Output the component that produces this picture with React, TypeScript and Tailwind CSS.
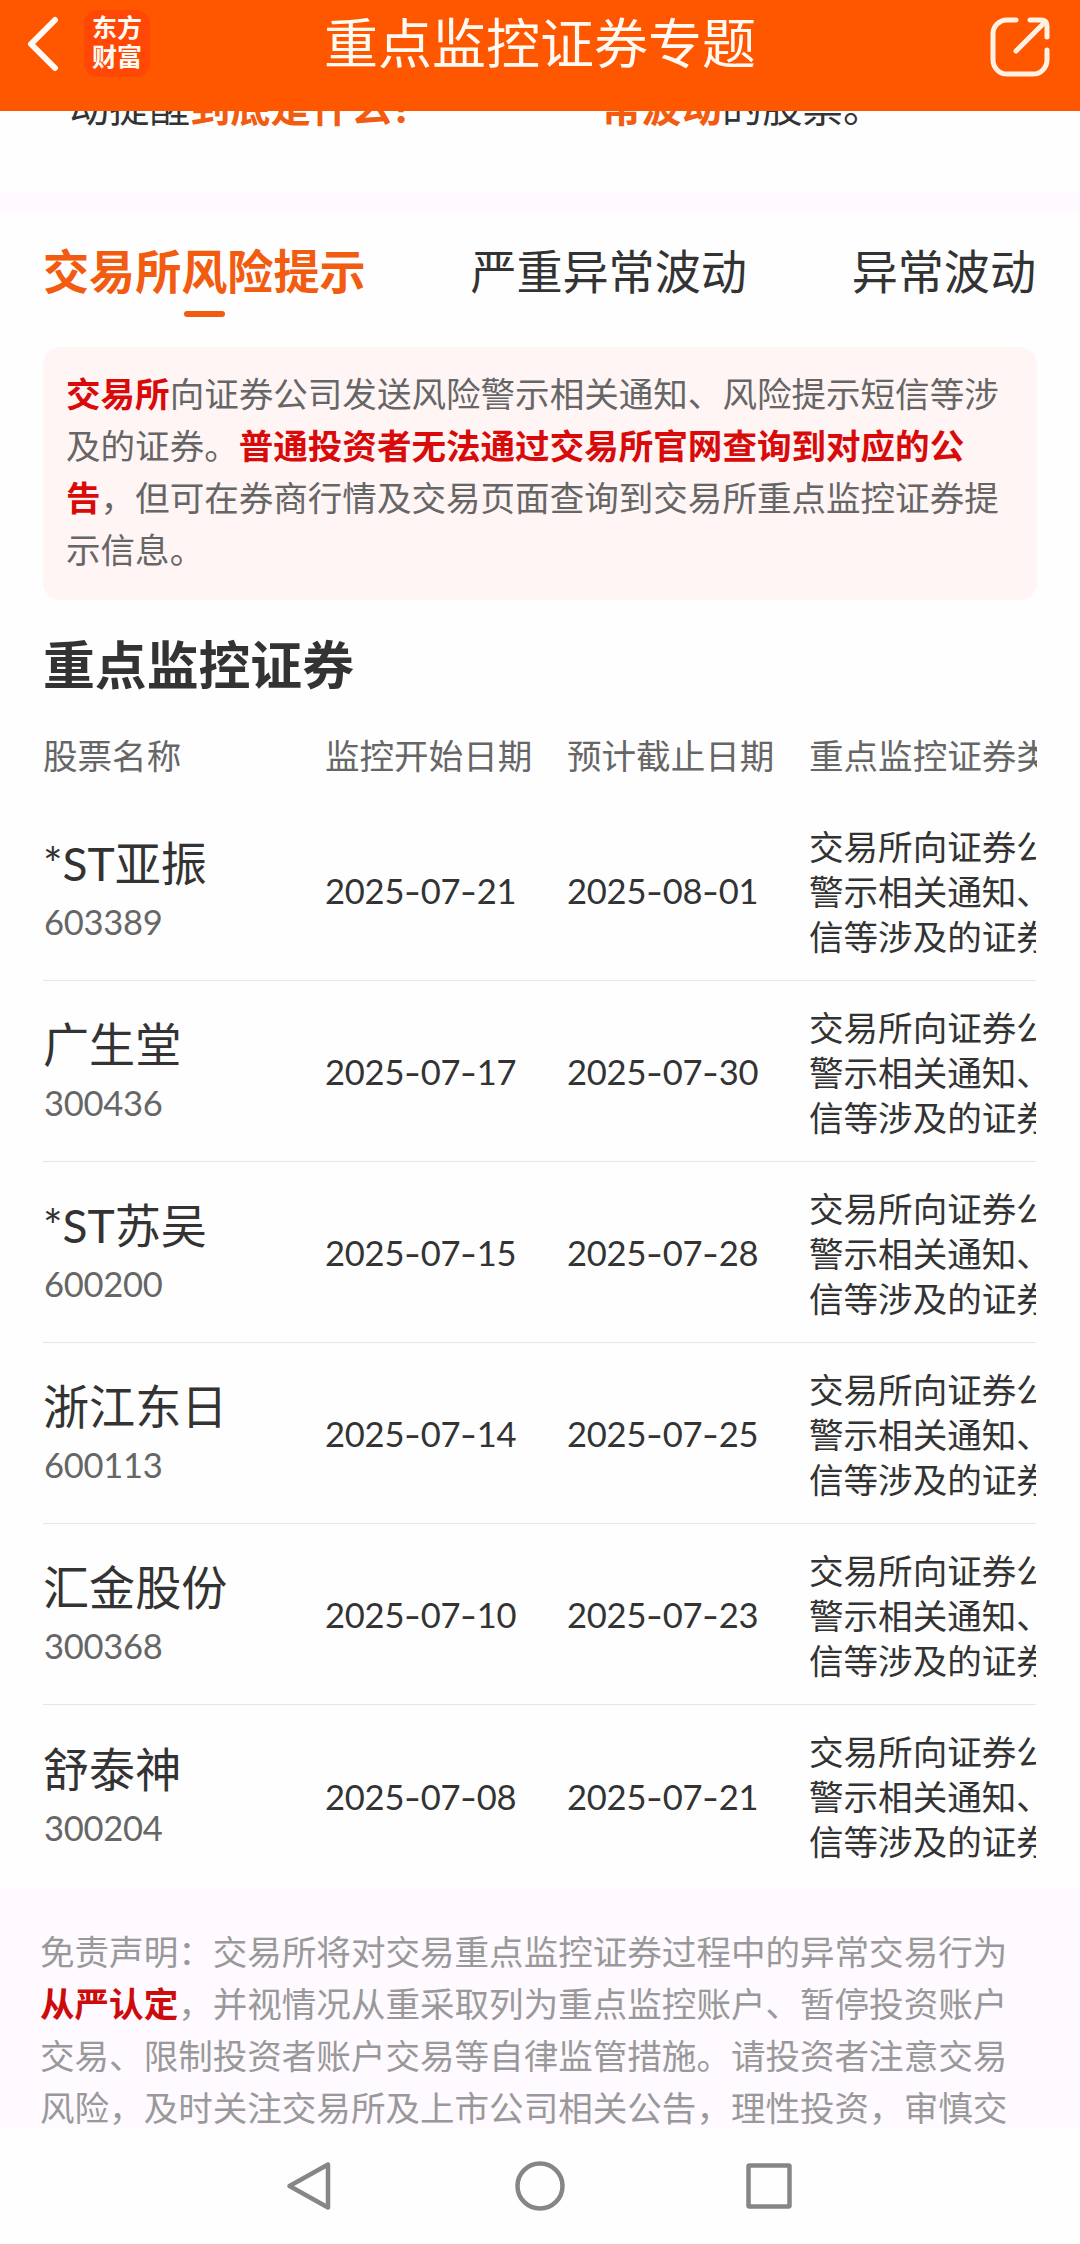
import React from "react";

const stocks = [
  { name: "*ST亚振", code: "603389", start: "2025-07-21", end: "2025-08-01" },
  { name: "广生堂", code: "300436", start: "2025-07-17", end: "2025-07-30" },
  { name: "*ST苏吴", code: "600200", start: "2025-07-15", end: "2025-07-28" },
  { name: "浙江东日", code: "600113", start: "2025-07-14", end: "2025-07-25" },
  { name: "汇金股份", code: "300368", start: "2025-07-10", end: "2025-07-23" },
  { name: "舒泰神", code: "300204", start: "2025-07-08", end: "2025-07-21" },
];

function Header() {
  return (
    <header className="relative z-10 flex h-[111px] shrink-0 items-start justify-between bg-[#ff5600] text-white">
      <div className="flex w-[200px] items-start pt-[10px] pl-[26px]">
        <svg className="mt-[4px] h-[58px] w-[36px]" viewBox="0 0 36 58" fill="none" stroke="#fffaf3" strokeWidth="6" strokeLinecap="round" strokeLinejoin="round">
          <path d="M29 6 L5 30 L29 54" />
        </svg>
        <div className="ml-[22px] flex h-[67px] w-[66px] flex-col items-center justify-center rounded-[14px] bg-[#ff4806] pb-[3px] text-[25px] leading-[29px] font-bold text-[#fffaf3]">
          <span>东方</span>
          <span>财富</span>
        </div>
      </div>
      <h1 className="text-[54px] leading-[87px] text-[#fffaf3]">重点监控证券专题</h1>
      <div className="flex w-[200px] justify-end pt-[15px] pr-[28px]">
        <svg className="h-[64px] w-[64px]" viewBox="0 0 64 64" fill="none" stroke="#fff1e4" strokeWidth="5" strokeLinecap="round" strokeLinejoin="round">
          <path d="M28 5 H19 A14 14 0 0 0 5 19 V45 A14 14 0 0 0 19 59 H45 A14 14 0 0 0 59 45 V35" />
          <path d="M42 5 H53 Q59 5 59 11 V22" />
          <path d="M28 36 L57 7" />
        </svg>
      </div>
    </header>
  );
}

function Intro() {
  return (
    <section className="-mt-[35px] flex h-[116px] shrink-0 text-[40.32px] leading-[61px] whitespace-nowrap text-[#333]">
      <p className="w-[532px] pl-[69px]">
        动提醒<b className="text-[#f25c10]">到底是什么？</b>
      </p>
      <p className="pl-[69px]">
        <b className="text-[#f25c10]">常波动</b>的股票。
      </p>
    </section>
  );
}

function Tabs() {
  return (
    <nav className="flex h-[134px] shrink-0 justify-between pt-[25px] pr-[44px] pl-[43px] text-[46.08px] leading-[67px] whitespace-nowrap text-[#333]">
      <div className="flex flex-col items-center font-bold text-[#f25c10]">
        交易所风险提示
        <span className="mt-[6px] h-[6px] w-[41px] rounded-full bg-[#f25c10]" />
      </div>
      <div>严重异常波动</div>
      <div>异常波动</div>
    </nav>
  );
}

function Notice() {
  return (
    <div className="mx-[43px] h-[253px] shrink-0 rounded-[17px] bg-[#fff5f5] pt-[21px] pl-[23px] text-[34.56px] leading-[52px] whitespace-nowrap text-[#666]">
      <p><b className="text-[#d80a0a]">交易所</b>向证券公司发送风险警示相关通知、风险提示短信等涉</p>
      <p>及的证券。<b className="text-[#d80a0a]">普通投资者无法通过交易所官网查询到对应的公</b></p>
      <p><b className="text-[#d80a0a]">告</b>，但可在券商行情及交易页面查询到交易所重点监控证券提</p>
      <p>示信息。</p>
    </div>
  );
}

function DateText({ value }: { value: string }) {
  return (
    <span className="pt-[2px] tracking-[-0.24px]">
      {value.split("-").map((part, i) => (
        <React.Fragment key={i}>
          {i > 0 && <span className="inline-block w-[16.5px] scale-x-[1.35] text-center">-</span>}
          {part}
        </React.Fragment>
      ))}
    </span>
  );
}

function StockTable() {
  return (
    <section className="mx-[43px] flex h-[1287px] shrink-0 flex-col overflow-hidden whitespace-nowrap text-[#333]">
      <h2 className="mt-[27px] text-[51.84px] leading-[76px] font-bold">重点监控证券</h2>
      <div className="mt-[27px] grid h-[70px] grid-cols-[282px_242px_242px_400px] text-[34.56px] leading-[52px] text-[#666]">
        <span>股票名称</span>
        <span>监控开始日期</span>
        <span>预计截止日期</span>
        <span>重点监控证券类型</span>
      </div>
      {stocks.map((s) => (
        <div key={s.code} className="grid h-[181px] w-[993px] shrink-0 grid-cols-[282px_242px_242px_400px] items-center overflow-hidden border-b border-[#e6e6e6] text-[34.56px] last:border-b-0">
          <div>
            <div className="text-[46.08px] leading-[64px]">{s.name}</div>
            <div className="pl-px leading-[52px] tracking-[-0.3px] text-[#666]">{s.code}</div>
          </div>
          <DateText value={s.start} />
          <DateText value={s.end} />
          <div className="pt-[2px] leading-[45px]">
            <p>交易所向证券公司发送风险</p>
            <p>警示相关通知、风险提示短</p>
            <p>信等涉及的证券</p>
          </div>
        </div>
      ))}
    </section>
  );
}

function Disclaimer() {
  return (
    <section className="h-[241px] shrink-0 overflow-hidden bg-[#fefaff] pt-[39px] pl-[40px] text-[34.56px] leading-[52px] whitespace-nowrap text-[#999]">
      <p>免责声明：交易所将对交易重点监控证券过程中的异常交易行为</p>
      <p><b className="text-[#cc0c0c]">从严认定</b>，并视情况从重采取列为重点监控账户、暂停投资账户</p>
      <p>交易、限制投资者账户交易等自律监管措施。请投资者注意交易</p>
      <p>风险，及时关注交易所及上市公司相关公告，理性投资，审慎交</p>
    </section>
  );
}

function SystemNav() {
  return (
    <footer className="flex flex-1 items-center justify-center gap-[170px] bg-[#fefefe]">
      <svg className="-ml-px h-[60px] w-[60px]" viewBox="0 0 60 60" fill="none" stroke="#868686" strokeWidth="4.5" strokeLinejoin="round">
        <path d="M9.5 30 L48 8.5 V51.5 Z" />
      </svg>
      <svg className="h-[60px] w-[60px]" viewBox="0 0 60 60" fill="none" stroke="#868686" strokeWidth="4.5">
        <circle cx="30" cy="30" r="22.5" />
      </svg>
      <svg className="h-[60px] w-[60px]" viewBox="0 0 60 60" fill="none" stroke="#868686" strokeWidth="4.5" strokeLinejoin="round">
        <rect x="8.5" y="9.5" width="41" height="41" rx="1" />
      </svg>
    </footer>
  );
}

export default function App() {
  return (
    <div className="flex h-[2244px] w-[1080px] flex-col overflow-hidden bg-[#fefefe] font-['Lato','Noto_Sans_CJK_SC',sans-serif]" lang="zh-CN">
      <Header />
      <Intro />
      <div className="h-[21px] shrink-0 bg-[#fefaff]" />
      <Tabs />
      <Notice />
      <StockTable />
      <Disclaimer />
      <SystemNav />
    </div>
  );
}
